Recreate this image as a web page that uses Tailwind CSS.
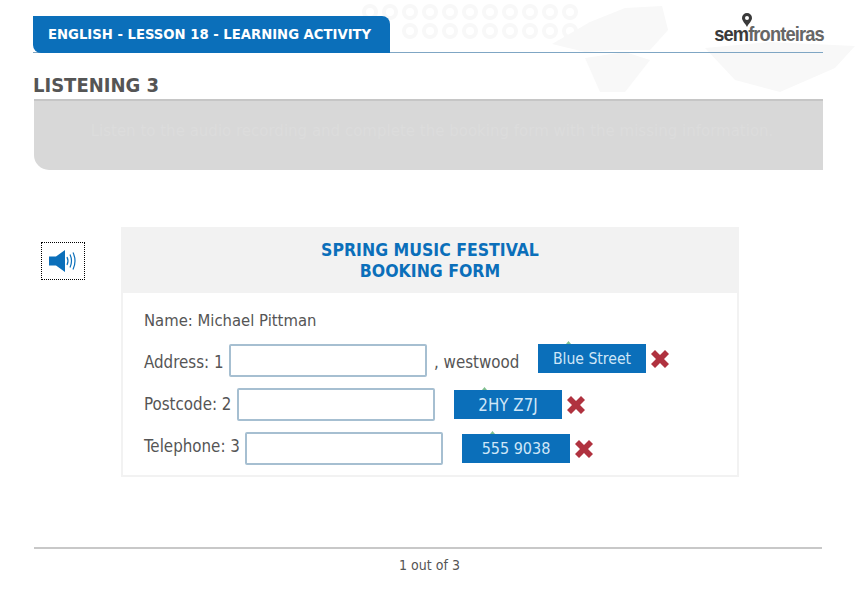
<!DOCTYPE html>
<html>
<head>
<meta charset="utf-8">
<script src="https://cdn.jsdelivr.net/npm/@tailwindcss/browser@4"></script>
</head>
<body class="bg-white font-['DejaVu_Sans'] [font-stretch:condensed] text-[#555]">
<div class="relative w-[860px] h-[600px] overflow-hidden pt-4 pl-[33px]">
  <svg class="absolute left-0 top-0 w-[860px] h-[100px]" viewBox="0 0 860 100" aria-hidden="true">
    <g fill="none" stroke="#f8f8f8" stroke-width="4">
      <circle cx="370" cy="12" r="6"/><circle cx="390" cy="12" r="6"/><circle cx="410" cy="12" r="6"/><circle cx="430" cy="12" r="6"/><circle cx="450" cy="12" r="6"/><circle cx="470" cy="12" r="6"/><circle cx="490" cy="12" r="6"/><circle cx="510" cy="12" r="6"/><circle cx="530" cy="12" r="6"/><circle cx="550" cy="12" r="6"/><circle cx="570" cy="12" r="6"/>
      <circle cx="410" cy="31" r="6"/><circle cx="430" cy="31" r="6"/><circle cx="450" cy="31" r="6"/><circle cx="470" cy="31" r="6"/><circle cx="490" cy="31" r="6"/><circle cx="510" cy="31" r="6"/><circle cx="530" cy="31" r="6"/><circle cx="550" cy="31" r="6"/><circle cx="570" cy="31" r="6"/>
    </g>
    <g fill="#f8f8f8">
      <path d="M552 44 L590 22 L625 8 L662 6 L668 30 L650 50 L615 50 L585 52Z"/>
      <path d="M585 58 L625 52 L650 60 L625 92 L600 92Z"/>
      <path d="M705 48 L770 42 L855 46 L835 68 L780 92 L735 80Z"/>
    </g>
  </svg>

  <div class="relative flex w-[790px] h-[37px] border-b border-[#7fa6c4]">
    <div class="w-[357px] h-[37px] bg-[#0b6fba] rounded-tr-[8px] rounded-bl-[8px] pl-[15px] text-white font-bold text-[14.700px] leading-[36px] whitespace-nowrap">ENGLISH - LESSON 18 - LEARNING ACTIVITY</div>
    <div class="absolute right-0 -top-[3px] w-[109px] flex flex-col items-center">
      <svg class="w-[10px] h-[14px] -ml-[44px]" viewBox="0 0 10 14"><path d="M5 0a5 5 0 0 1 5 5c0 3-3 5-5 9-2-4-5-6-5-9a5 5 0 0 1 5-5z" fill="#3a3a3a"/><circle cx="5" cy="5" r="2" fill="#fff"/></svg>
      <div class="-mt-[3px] font-['Liberation_Sans'] text-[21px] leading-[20px] tracking-[-1px] whitespace-nowrap [font-stretch:normal] scale-x-[0.87]"><span class="font-bold text-[#3a3a3a]">sem</span><span class="font-bold text-[#666]">fronteiras</span></div>
    </div>
  </div>

  <h1 class="relative mt-[20px] w-[790px] text-[20px] leading-[24px] font-bold text-[#555]">LISTENING 3</h1>
  <div class="relative mt-[2px] ml-px w-[789px] h-[71px] bg-[#d8d8d8] border-t-2 border-[#c6c6c6] rounded-bl-[15px] pt-[17px] pl-[7px] text-center text-[#dcdcdc] text-[16.700px] leading-[24px] whitespace-nowrap">Listen to the audio recording and complete the booking form with the missing information.</div>

  <div class="flex items-start mt-[57px] ml-[8px]">
    <div class="mt-[15px] w-[44px] h-[38px] border border-dotted border-black flex items-center justify-center">
      <svg class="w-[28px] h-[22px]" viewBox="0 0 28 22">
        <path d="M0 6.500h7l9-6.500v22l-9-6.500H0z" fill="#0b6fba"/>
        <g fill="none" stroke="#0b6fba" stroke-width="1.2"><path d="M18 7q2 4 0 8"/><path d="M21 4.500q3 6.500 0 13"/><path d="M24 2.500q4 8.500 0 17"/></g>
      </svg>
    </div>
    <div class="ml-[36px] w-[618px] h-[250px] border-2 border-[#f2f2f2]">
      <div class="h-[64px] bg-[#f2f2f2] text-center text-[#0b6fba] font-bold text-[17.500px] leading-[21px] pt-[11px]">SPRING MUSIC FESTIVAL<br>BOOKING FORM</div>
      <div class="pl-[21px] text-[16.800px] text-[#555]">
        <div class="h-[21px] mt-[17px] leading-[21px] text-[16.500px]">Name: Michael Pittman</div>
        <div class="flex items-start h-[44px] mt-[13px]">
          <span class="w-[85px] mt-[8px] leading-[21px] whitespace-nowrap">Address: 1</span>
          <div class="w-[198px] h-[33px] border-2 border-[#a6bfd1] rounded-[2px]"></div>
          <span class="w-[104px] ml-[7px] mt-[8px] leading-[21px] whitespace-nowrap">, westwood</span>
          <div class="relative w-[108px] h-[29px] bg-[#0b6fba] text-[#cfe6f7] text-[15.600px] text-center leading-[31px]">Blue Street<span class="absolute left-[28px] -top-[3px] w-[5px] h-[3px] bg-[#7fbf8f] [clip-path:polygon(50%_0,100%_100%,0_100%)]"></span></div>
          <svg class="ml-[5px] mt-[6px] w-[18px] h-[18px]" viewBox="0 0 18 18"><path d="M0 4 4 0 9 5 14 0 18 4 13 9 18 14 14 18 9 13 4 18 0 14 5 9z" fill="#b0323f"/></svg>
        </div>
        <div class="flex items-start h-[44px]">
          <span class="w-[93px] mt-[6px] leading-[21px] whitespace-nowrap">Postcode: 2</span>
          <div class="w-[198px] h-[33px] border-2 border-[#a6bfd1] rounded-[2px]"></div>
          <div class="relative ml-[19px] mt-[2px] w-[108px] h-[29px] bg-[#0b6fba] text-[#cfe6f7] text-center leading-[30px]">2HY Z7J<span class="absolute left-[28px] -top-[3px] w-[5px] h-[3px] bg-[#7fbf8f] [clip-path:polygon(50%_0,100%_100%,0_100%)]"></span></div>
          <svg class="ml-[5px] mt-[8px] w-[18px] h-[18px]" viewBox="0 0 18 18"><path d="M0 4 4 0 9 5 14 0 18 4 13 9 18 14 14 18 9 13 4 18 0 14 5 9z" fill="#b0323f"/></svg>
        </div>
        <div class="flex items-start h-[44px]">
          <span class="w-[101px] mt-[4px] leading-[21px] whitespace-nowrap">Telephone: 3</span>
          <div class="w-[198px] h-[33px] border-2 border-[#a6bfd1] rounded-[2px]"></div>
          <div class="relative ml-[19px] mt-[2px] w-[108px] h-[29px] bg-[#0b6fba] text-[#cfe6f7] text-[16px] text-center leading-[29px]">555 9038<span class="absolute left-[28px] -top-[3px] w-[5px] h-[3px] bg-[#7fbf8f] [clip-path:polygon(50%_0,100%_100%,0_100%)]"></span></div>
          <svg class="ml-[5px] mt-[8px] w-[18px] h-[18px]" viewBox="0 0 18 18"><path d="M0 4 4 0 9 5 14 0 18 4 13 9 18 14 14 18 9 13 4 18 0 14 5 9z" fill="#b0323f"/></svg>
        </div>
      </div>
    </div>
  </div>

  <div class="mt-[70px] ml-px w-[788px] border-t-2 border-[#c8c8c8] text-center text-[14px] leading-[20px] pt-[6px] pl-[3px]">1 out of 3</div>
</div>
</body>
</html>
